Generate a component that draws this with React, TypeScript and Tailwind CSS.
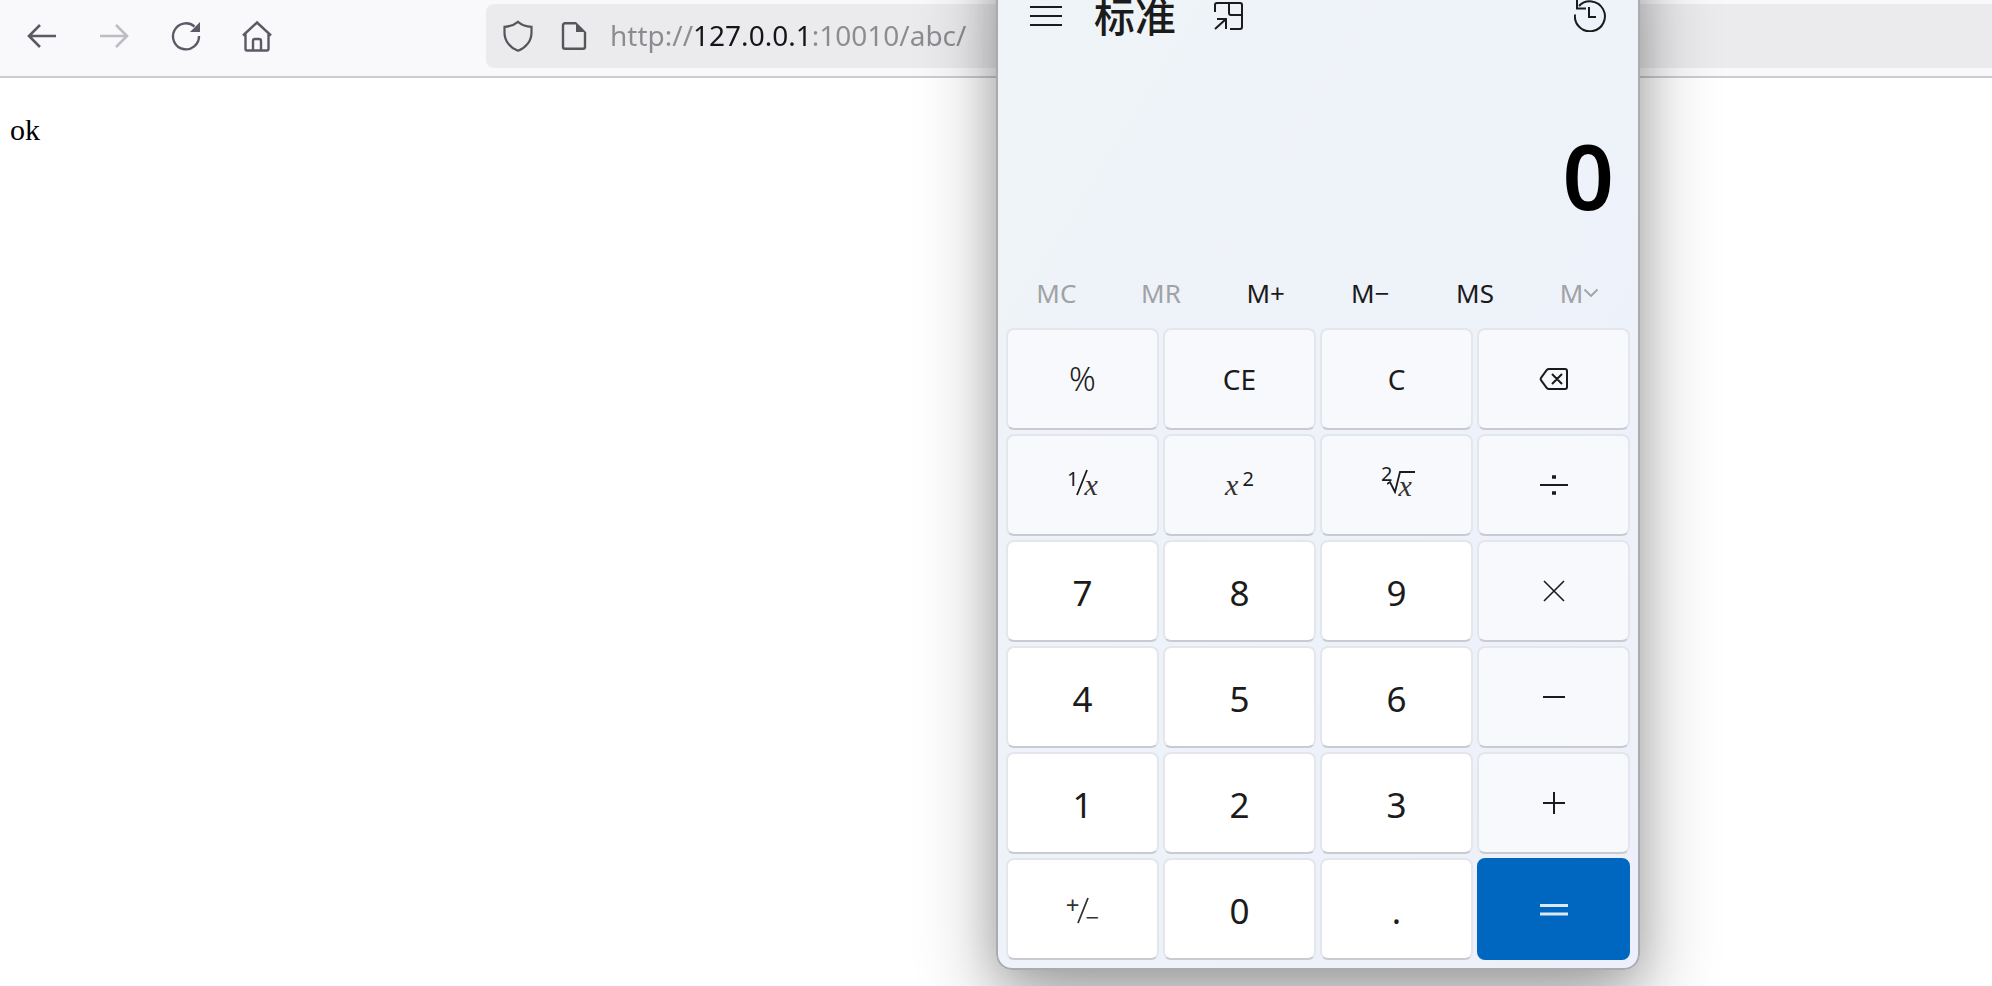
import type { ReactNode } from "react";

const uiFont = "font-['Noto_Sans','Open_Sans',sans-serif]";

function Icon({ children, width = 2 }: { children: ReactNode; width?: number }) {
  return (
    <svg viewBox="0 0 32 32" className="size-8 shrink-0" fill="none" stroke="currentColor" strokeWidth={width} aria-hidden="true">
      {children}
    </svg>
  );
}

// Thin fraction bar used by the reciprocal and negate keys
function Slash() {
  return (
    <svg viewBox="0 0 14 28" className="-mx-1 h-7 w-3.5" fill="none" stroke="currentColor" strokeWidth="1.8" aria-hidden="true">
      <path d="M12 1L2 26" />
    </svg>
  );
}

const navButtons = [
  {
    label: "Back",
    color: "text-[#5b5b66]",
    icon: <path d="M30 16H3M14 5L3 16l11 11" strokeWidth="2.6" />,
  },
  {
    label: "Forward",
    color: "text-[#bdbdc3]",
    icon: <path d="M2 16h27M18 5l11 11-11 11" strokeWidth="2.6" />,
  },
  {
    label: "Reload",
    color: "text-[#5b5b66]",
    icon: (
      <>
        <path d="M24.5 6.5A13 13 0 1 0 29 16" strokeWidth="2.4" />
        <path d="M30 2v10H20z" fill="currentColor" stroke="none" />
      </>
    ),
  },
  {
    label: "Home",
    color: "text-[#5b5b66]",
    icon: (
      <path
        d="M1 15.5L15 2.500l14 13M3.500 13.500V29a1.500 1.500 0 0 0 1.500 1.500h20a1.500 1.500 0 0 0 1.500-1.500V13.500M11 30V21a2 2 0 0 1 2-2h4a2 2 0 0 1 2 2v9"
        strokeWidth="2.4"
      />
    ),
  },
];

const memoryKeys: { label: string; content: ReactNode; disabled?: boolean }[] = [
  { label: "Memory clear", content: "MC", disabled: true },
  { label: "Memory recall", content: "MR", disabled: true },
  { label: "Memory add", content: "M+" },
  { label: "Memory subtract", content: "M−" },
  { label: "Memory store", content: "MS" },
  {
    label: "Memory list",
    disabled: true,
    content: (
      <>
        M
        <svg viewBox="0 0 16 10" className="h-2.5 w-4" fill="none" stroke="currentColor" strokeWidth="1.8" aria-hidden="true">
          <path d="M1.500 1.500L8 8l6.500-6.500" />
        </svg>
      </>
    ),
  },
];

type Key = { label: string; content: ReactNode; kind: "number" | "function" | "equals" };

const serifX = <i className="font-['Liberation_Serif',serif] text-[30px] leading-8 text-[#333]">x</i>;

const keys: Key[] = [
  { label: "Percent", kind: "function", content: <span className="text-[33px] font-light">%</span> },
  { label: "Clear entry", kind: "function", content: "CE" },
  { label: "Clear", kind: "function", content: "C" },
  {
    label: "Backspace",
    kind: "function",
    content: (
      <Icon>
        <path d="M11 6h16a2 2 0 0 1 2 2v16a2 2 0 0 1-2 2H11a3 3 0 0 1-2.200-1L3 17.200a2 2 0 0 1 0-2.400L8.800 7A3 3 0 0 1 11 6zM14 11l10 10M24 11L14 21" />
      </Icon>
    ),
  },
  {
    label: "Reciprocal",
    kind: "function",
    content: (
      <span className="flex items-start">
        <span className="text-xl leading-5">1</span>
        <Slash />
        {serifX}
      </span>
    ),
  },
  {
    label: "Square",
    kind: "function",
    content: (
      <span className="flex items-start gap-1">
        {serifX}
        <span className="text-xl leading-5">2</span>
      </span>
    ),
  },
  {
    label: "Square root",
    kind: "function",
    content: (
      <span className="flex items-start">
        <span className="text-xl leading-5">2</span>
        <span className="relative -ml-1.5 pl-3">
          <svg viewBox="0 0 28 24" className="absolute top-1.5 left-0 h-6 w-7" fill="none" stroke="currentColor" strokeWidth="1.800" aria-hidden="true">
            <path d="M0 14l3-2 5 10 5-20h15" />
          </svg>
          {serifX}
        </span>
      </span>
    ),
  },
  {
    label: "Divide",
    kind: "function",
    content: (
      <Icon>
        <path d="M2 16h28" />
        <path d="M14 8h4M14 24h4" strokeWidth="3.600" />
      </Icon>
    ),
  },
  { label: "Seven", kind: "number", content: "7" },
  { label: "Eight", kind: "number", content: "8" },
  { label: "Nine", kind: "number", content: "9" },
  { label: "Multiply", kind: "function", content: <Icon width={1.6}><path d="M6 6l20 20M26 6L6 26" /></Icon> },
  { label: "Four", kind: "number", content: "4" },
  { label: "Five", kind: "number", content: "5" },
  { label: "Six", kind: "number", content: "6" },
  { label: "Minus", kind: "function", content: <Icon><path d="M5 16h22" /></Icon> },
  { label: "One", kind: "number", content: "1" },
  { label: "Two", kind: "number", content: "2" },
  { label: "Three", kind: "number", content: "3" },
  { label: "Plus", kind: "function", content: <Icon><path d="M5 16h22M16 5v22" /></Icon> },
  {
    label: "Negate",
    kind: "number",
    content: (
      <span className="flex h-7 items-start text-[#333]">
        <span className="text-[24px] leading-4">+</span>
        <Slash />
        <span className="self-end text-[24px] leading-4">−</span>
      </span>
    ),
  },
  { label: "Zero", kind: "number", content: "0" },
  { label: "Decimal point", kind: "number", content: "." },
  { label: "Equals", kind: "equals", content: <Icon width={3}><path d="M2 12.500h28M2 21h28" /></Icon> },
];

const keyStyles = {
  number: "border-[#e3e6ed] border-b-[#c9cbd1] bg-white pt-1 text-[35px]",
  function: "border-[#e3e6ed] border-b-[#c9cbd1] bg-[#f8f9fd] text-[28px]",
  equals: "border-[#0067c0] bg-[#0067c0] text-[#dbe8f5]",
};

function BrowserToolbar() {
  return (
    <header className="flex items-center border-b-2 border-[#cccccc] bg-[#f9f9fb] pt-1 pb-2 pl-1.5">
      <nav className="flex" aria-label="Navigation">
        {navButtons.map((button) => (
          <button key={button.label} type="button" aria-label={button.label} className={`flex w-18 justify-center ${button.color}`}>
            <Icon>{button.icon}</Icon>
          </button>
        ))}
      </nav>
      <div className="ml-48 flex h-16 flex-1 items-center rounded-l-lg bg-[#ebebed] pl-4 text-[#55555c]">
        <Icon>
          <path d="M16 1.800c4 3.400 8.500 4.800 13.500 5v6c0 8-5.500 15-13.500 18C8 27.800 2.500 20.800 2.500 12.800v-6c5-.2 9.500-1.600 13.500-5z" strokeWidth="2.2" />
        </Icon>
        <div className="ml-6">
          <Icon>
            <path d="M18 3.200H7a2 2 0 0 0-2 2v21.600a2 2 0 0 0 2 2h18a2 2 0 0 0 2-2V12" strokeWidth="2.400" />
            <path d="M18 2l10 10H18z" fill="currentColor" stroke="none" />
          </Icon>
        </div>
        <input
          type="text"
          aria-label="Address"
          defaultValue="http://127.0.0.1:10010/abc/"
          className="ml-5 min-w-0 flex-1 bg-[linear-gradient(90deg,#8c8c90_83px,#15141a_83px,#15141a_201px,#8c8c90_201px)] bg-clip-text pb-0.5 text-[28px] leading-10 text-transparent outline-none"
        />
      </div>
    </header>
  );
}

function Calculator() {
  return (
    <section
      aria-label="Calculator"
      className="absolute -top-20 left-1/2 w-[644px] rounded-b-2xl border-2 border-t-0 border-[#a9abae] bg-linear-to-br from-[#eff4f8] to-[#edf0fa] pt-20 text-[#1b1b1b] shadow-[0_36px_80px_rgba(0,0,0,0.32),0_4px_40px_rgba(0,0,0,0.16)]"
    >
      <div className="flex h-8 items-center px-8">
        <button type="button" aria-label="Open navigation">
          <Icon>
            <path d="M0 7h32M0 16h32M0 25h32" />
          </Icon>
        </button>
        <h1 className="ml-8 pb-1 font-['Noto_Sans_CJK_SC',sans-serif] text-[41px] leading-8 font-medium">标准</h1>
        <button type="button" aria-label="Keep on top" className="ml-9">
          <Icon>
            <path d="M3 12V5a2 2 0 0 1 2-2h23a2 2 0 0 1 2 2v22a2 2 0 0 1-2 2H18M17 3v10a2 2 0 0 0 2 2h11M3 29l11-10M5 19h9v10" />
          </Icon>
        </button>
        <button type="button" aria-label="History" className="ml-auto">
          <Icon>
            <path d="M1 14.500A15 15 0 1 0 5 6M3 0v8.500h9M15 7v10h7" />
          </Icon>
        </button>
      </div>

      <output className="flex h-[226px] items-center justify-end pt-15 pr-6 text-[90px] leading-none font-semibold text-black">0</output>

      <div className="grid h-[70px] grid-cols-6 px-1.5 text-[26px]">
        {memoryKeys.map((key) => (
          <button
            key={key.label}
            type="button"
            aria-label={key.label}
            disabled={key.disabled}
            className="flex items-center justify-center disabled:text-[#a0a2a6]"
          >
            {key.content}
          </button>
        ))}
      </div>

      <div className="grid grid-cols-4 gap-1 px-2 pb-2">
        {keys.map((key) => (
          <button
            key={key.label}
            type="button"
            aria-label={key.label}
            className={`flex h-[102px] items-center justify-center rounded-lg border-2 ${keyStyles[key.kind]}`}
          >
            {key.content}
          </button>
        ))}
      </div>
    </section>
  );
}

export default function App() {
  return (
    <div className={`relative min-h-screen overflow-hidden bg-white ${uiFont}`}>
      <BrowserToolbar />
      <main className="px-2.5 py-9">
        <pre className="font-['Liberation_Serif',serif] text-[30px] leading-8 text-black">ok</pre>
      </main>
      <Calculator />
    </div>
  );
}
